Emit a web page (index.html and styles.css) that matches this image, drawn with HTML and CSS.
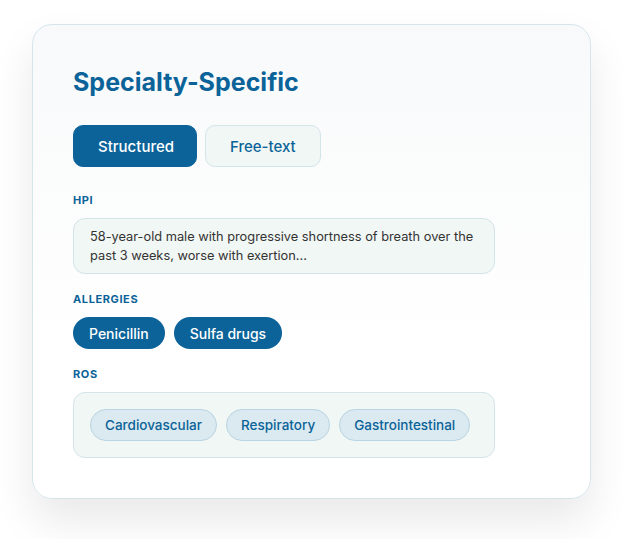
FILE: index.html
```html
<!DOCTYPE html>
<html lang="en">
<head>
    <meta charset="UTF-8">
    <title>Specialty-Specific</title>
    <link rel="stylesheet" href="styles.css">
</head>
<body>
    <div class="card">
        <h1>Specialty-Specific</h1>
        <div class="tabs">
            <button class="tab active">Structured</button>
            <button class="tab">Free-text</button>
        </div>
        <div class="label">HPI</div>
        <div class="box hpi">58-year-old male with progressive shortness of breath over the past 3 weeks, worse with exertion...</div>
        <div class="label">Allergies</div>
        <div class="pills">
            <span class="pill">Penicillin</span>
            <span class="pill">Sulfa drugs</span>
        </div>
        <div class="label">ROS</div>
        <div class="box chips">
            <span class="chip">Cardiovascular</span>
            <span class="chip">Respiratory</span>
            <span class="chip">Gastrointestinal</span>
        </div>
    </div>
</body>
</html>
```
FILE: styles.css
```css
:root {
    --primary: #0b6399;
    --box-bg: #f1f7f4;
    --box-border: #d3e4ea;
    --chip-bg: #dbeaf0;
    --chip-border: #b9d4e2;
}
* {
    box-sizing: border-box;
}
body {
    margin: 0;
    padding: 24px 0 41px 32px;
    background: #fff;
    font-family: Inter, "Noto Sans", sans-serif;
}
.card {
    width: 559px;
    padding: 40px;
    border: 1px solid #d6e5ec;
    border-radius: 20px;
    background: linear-gradient(180deg, #f8f9fa, #fff 70%);
    box-shadow: 0 22px 44px rgba(0, 0, 0, 0.09);
}
.card > * {
    max-width: 422px;
}
h1 {
    margin: 0;
    color: var(--primary);
    font-size: 25px;
    line-height: 34px;
    font-weight: 700;
}
.tabs {
    display: flex;
    gap: 8px;
    margin-top: 26px;
}
.tab {
    height: 42px;
    padding: 0 24px;
    border-radius: 10px;
    font: 500 15px Inter, sans-serif;
    color: var(--primary);
    background: var(--box-bg);
    border: 1px solid var(--box-border);
}
.tab.active {
    width: 124px;
    background: var(--primary);
    border-color: var(--primary);
    color: #fff;
}
.label {
    margin-top: 27px;
    color: var(--primary);
    font-size: 11px;
    line-height: 12px;
    font-weight: 700;
    letter-spacing: 0.6px;
    text-transform: uppercase;
}
.box {
    margin-top: 12px;
    background: var(--box-bg);
    border: 1px solid var(--box-border);
    border-radius: 12px;
}
.hpi {
    padding: 8px 10px 8px 16px;
    font-size: 12.8px;
    line-height: 19px;
    color: #333;
}
.pills {
    display: flex;
    gap: 9px;
    margin-top: 13px;
}
.pill {
    height: 32px;
    padding: 0 16px;
    display: flex;
    align-items: center;
    border-radius: 16px;
    background: var(--primary);
    color: #fff;
    font-size: 14px;
    font-weight: 500;
}
.chips {
    display: flex;
    gap: 9px;
    padding: 16px;
}
.chip {
    height: 32px;
    padding: 0 14px;
    display: flex;
    align-items: center;
    border-radius: 16px;
    background: var(--chip-bg);
    border: 1px solid var(--chip-border);
    color: var(--primary);
    font-size: 13.5px;
    font-weight: 500;
}
.label + .box,
.label + .pills {
    margin-top: 12px;
}
.hpi + .label,
.pills + .label {
    margin-top: 19px;
}
```
